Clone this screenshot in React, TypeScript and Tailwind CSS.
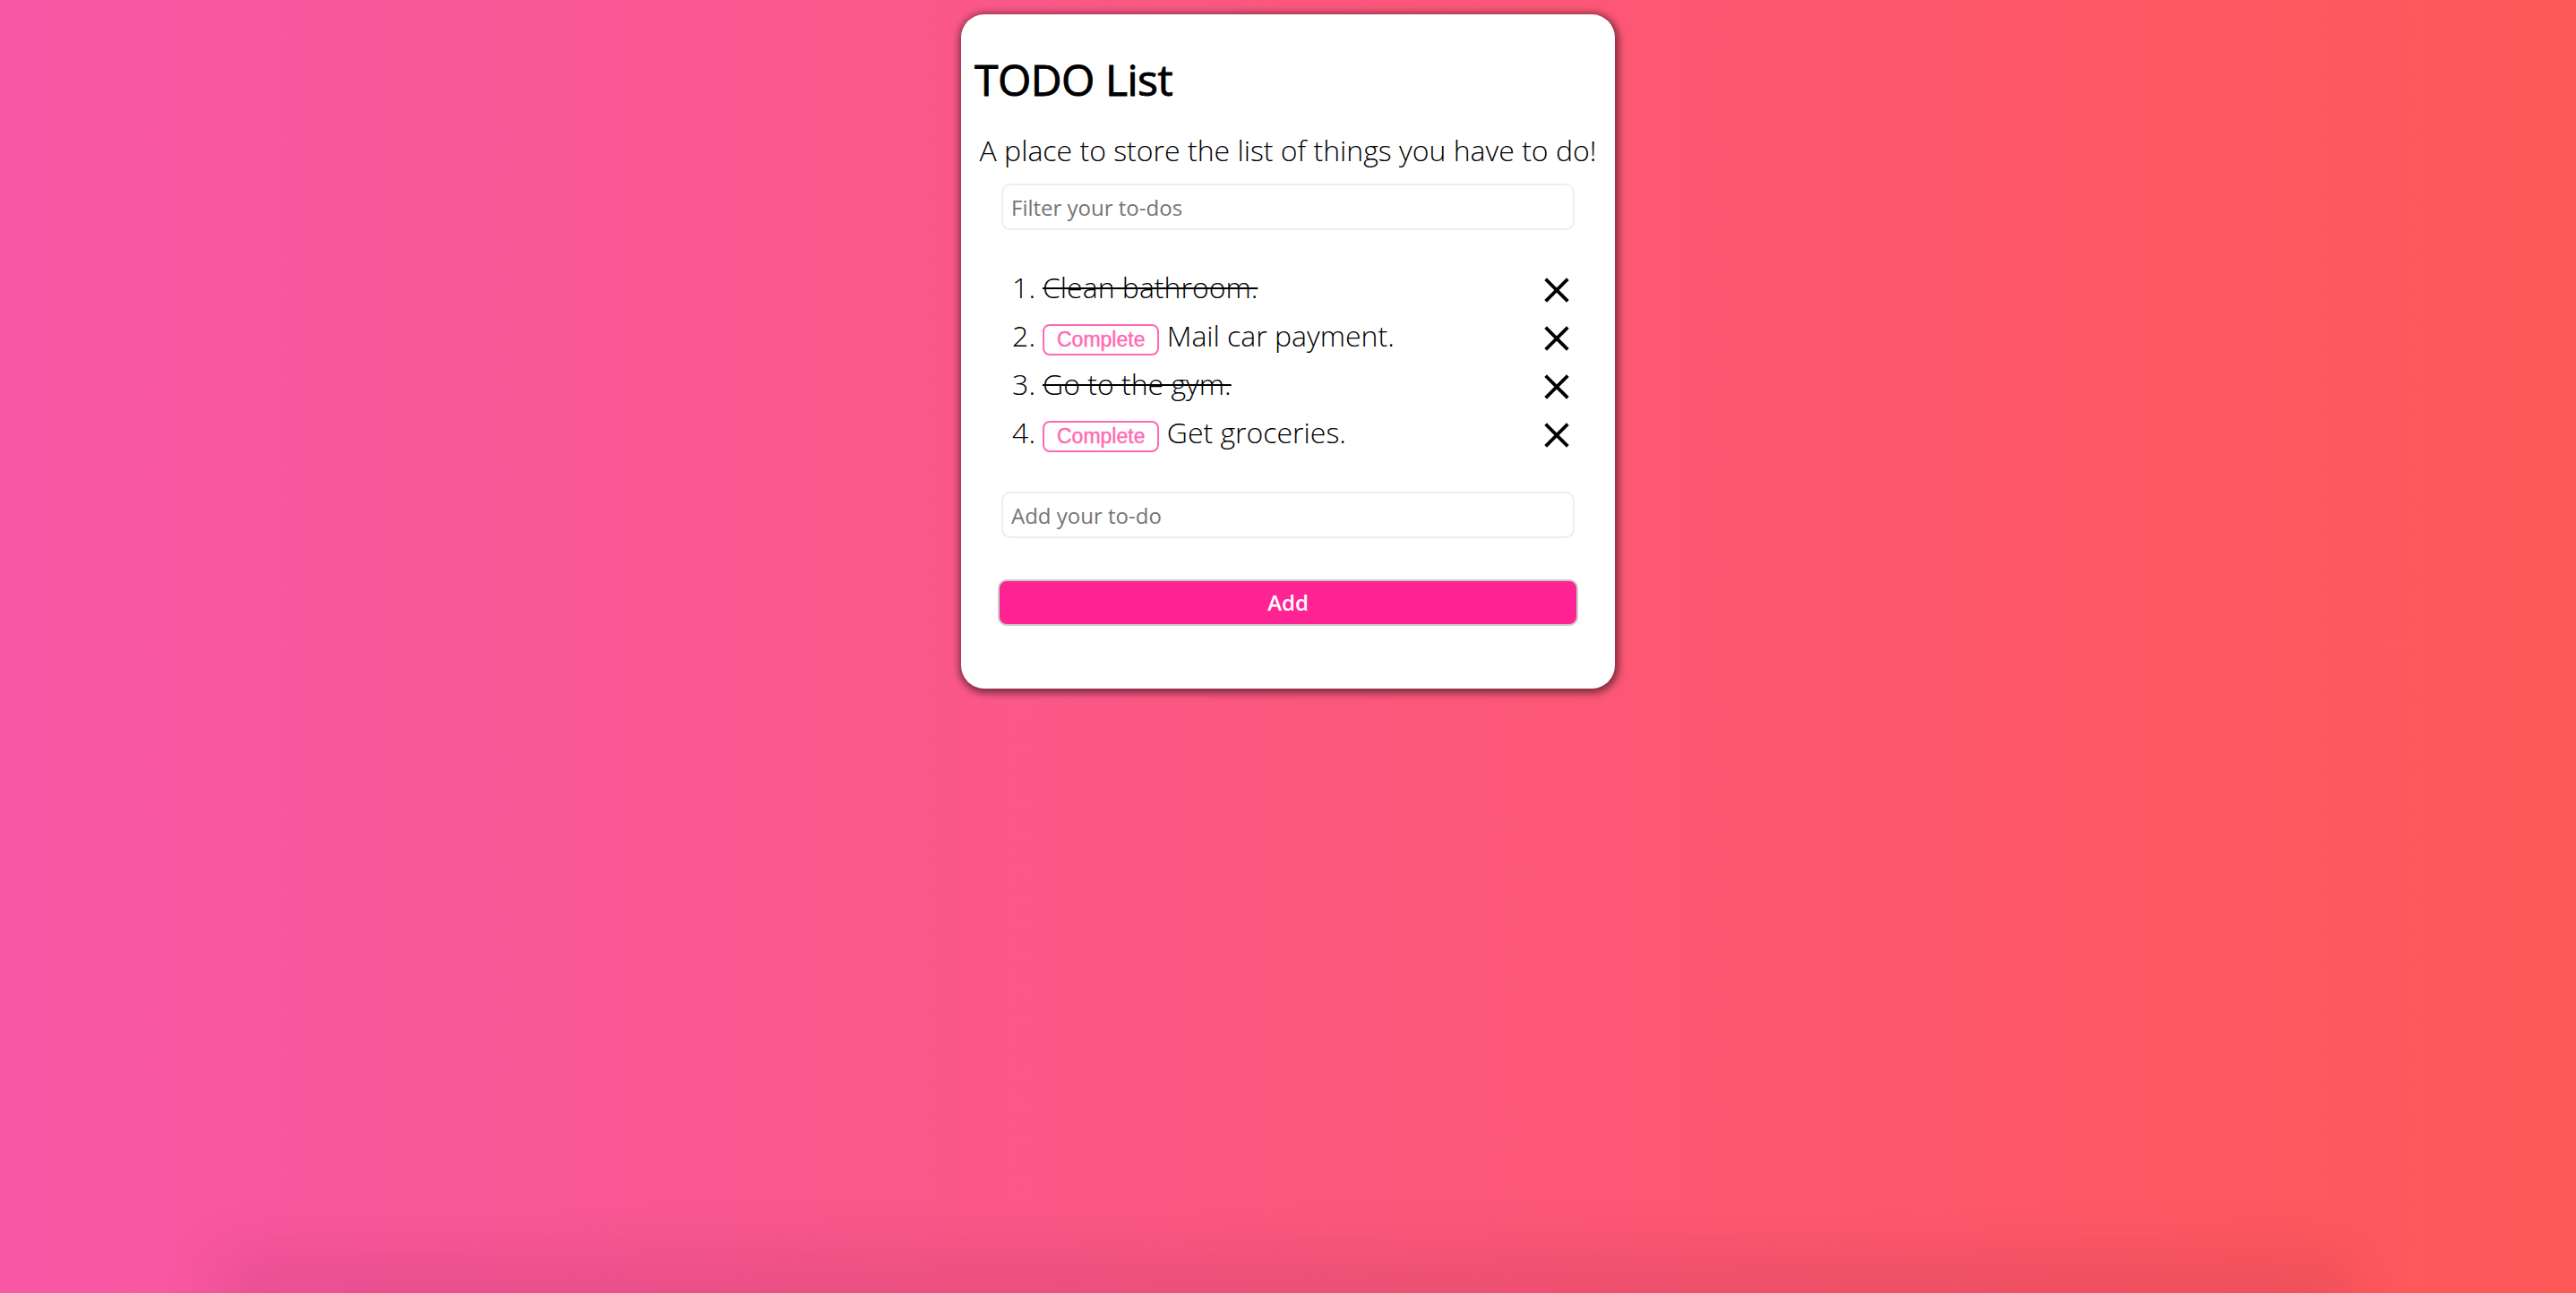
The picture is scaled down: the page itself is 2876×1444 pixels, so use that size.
import React from "react";

type Todo = { text: string; done: boolean };

const todos: Todo[] = [
  { text: "Clean bathroom.", done: true },
  { text: "Mail car payment.", done: false },
  { text: "Go to the gym.", done: true },
  { text: "Get groceries.", done: false },
];

function XIcon() {
  return (
    <svg width="28" height="28" viewBox="0 0 28 28" className="mt-[6px] mr-[6px] shrink-0">
      <line x1="3" y1="3" x2="25" y2="25" stroke="#000" strokeWidth="3.8" strokeLinecap="square" />
      <line x1="25" y1="3" x2="3" y2="25" stroke="#000" strokeWidth="3.8" strokeLinecap="square" />
    </svg>
  );
}

export default function App() {
  return (
    <div className="h-screen w-full overflow-hidden flex flex-col items-center bg-[linear-gradient(to_right,#f857a6,#ff5858)] font-['Open_Sans',sans-serif]">
      <div className="mt-[16px] w-[730px] shrink-0 bg-white rounded-[26px] shadow-[1px_2px_8px_3px_rgba(0,0,0,0.5)] px-[15px] pt-[49px] pb-[70px]">
        <h1 className="text-[48px] leading-[48px] font-normal text-black tracking-[-0.5px] [-webkit-text-stroke:0.9px_#000]">TODO List</h1>
        <p className="mt-[39px] text-[32px] leading-[32px] font-light text-black text-center">
          A place to store the list of things you have to do!
        </p>
        <input
          className="mt-[21px] block mx-auto w-[640px] h-[52px] border-2 border-[#eeeeee] rounded-[10px] pl-[9px] text-[24px] font-normal text-black placeholder:text-[#757575] outline-none font-['Open_Sans',sans-serif]"
          placeholder="Filter your to-dos"
        />
        <ol className="mt-[37px] mx-auto w-[640px]">
          {todos.map((t, i) => (
            <li key={i} className="flex justify-between items-start h-[54px]">
              <div className="text-[32px] leading-[54px] font-light text-black whitespace-nowrap">
                <span className="inline-block w-[46px] pr-[8px] text-right">{i + 1}.</span>
                {t.done ? (
                  <span className="line-through decoration-[2px] decoration-black">{t.text}</span>
                ) : (
                  <>
                    <button className="inline-block align-baseline h-[35px] px-[14px] border-2 border-[#ff69b4] rounded-[8px] bg-white text-[#ff69b4] text-[23px] leading-[31px] [-webkit-text-stroke:0.4px_#ff69b4] font-['Liberation_Sans',Arial,sans-serif]">
                      Complete
                    </button>{" "}
                    <span>{t.text}</span>
                  </>
                )}
              </div>
              <div className="h-[54px] flex items-center">
                <XIcon />
              </div>
            </li>
          ))}
        </ol>
        <input
          className="mt-[39px] block mx-auto w-[640px] h-[52px] border-2 border-[#eeeeee] rounded-[10px] pl-[9px] text-[24px] font-normal text-black placeholder:text-[#757575] outline-none font-['Open_Sans',sans-serif]"
          placeholder="Add your to-do"
        />
        <button className="mt-[46px] block mx-auto w-[648px] h-[52px] bg-[#ff2393] border-2 border-[#cccccc] rounded-[10px] text-white text-[24px] font-semibold font-['Open_Sans',sans-serif]">
          Add
        </button>
      </div>
      <div className="flex-1" />
      <div className="shrink-0 w-[2300px] h-0 shadow-[0_0_70px_40px_rgba(60,0,30,0.1)]" />
    </div>
  );
}
